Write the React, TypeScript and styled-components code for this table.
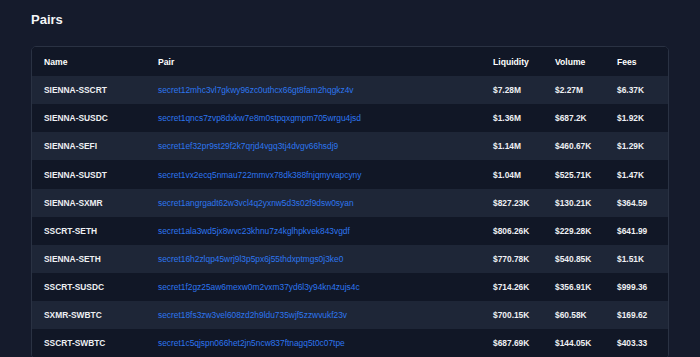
import React from "react";
import styled, { createGlobalStyle } from "styled-components";

type Pair = {
  name: string;
  address: string;
  liquidity: string;
  volume: string;
  fees: string;
};

const pairs: Pair[] = [
  { name: "SIENNA-SSCRT", address: "secret12mhc3vl7gkwy96zc0uthcx66gt8fam2hqgkz4v", liquidity: "$7.28M", volume: "$2.27M", fees: "$6.37K" },
  { name: "SIENNA-SUSDC", address: "secret1qncs7zvp8dxkw7e8m0stpqxgmpm705wrgu4jsd", liquidity: "$1.36M", volume: "$687.2K", fees: "$1.92K" },
  { name: "SIENNA-SEFI", address: "secret1ef32pr9st29f2k7qrjd4vgq3tj4dvgv66hsdj9", liquidity: "$1.14M", volume: "$460.67K", fees: "$1.29K" },
  { name: "SIENNA-SUSDT", address: "secret1vx2ecq5nmau722mmvx78dk388fnjqmyvapcyny", liquidity: "$1.04M", volume: "$525.71K", fees: "$1.47K" },
  { name: "SIENNA-SXMR", address: "secret1angrgadt62w3vcl4q2yxnw5d3s02f9dsw0syan", liquidity: "$827.23K", volume: "$130.21K", fees: "$364.59" },
  { name: "SSCRT-SETH", address: "secret1ala3wd5jx8wvc23khnu7z4kglhpkvek843vgdf", liquidity: "$806.26K", volume: "$229.28K", fees: "$641.99" },
  { name: "SIENNA-SETH", address: "secret16h2zlqp45wrj9l3p5px6j55thdxptmgs0j3ke0", liquidity: "$770.78K", volume: "$540.85K", fees: "$1.51K" },
  { name: "SSCRT-SUSDC", address: "secret1f2gz25aw6mexw0m2vxm37yd6l3y94kn4zujs4c", liquidity: "$714.26K", volume: "$356.91K", fees: "$999.36" },
  { name: "SXMR-SWBTC", address: "secret18fs3zw3vel608zd2h9ldu735wjf5zzwvukf23v", liquidity: "$700.15K", volume: "$60.58K", fees: "$169.62" },
  { name: "SSCRT-SWBTC", address: "secret1c5qjspn066het2jn5ncw837ftnagq5t0c07tpe", liquidity: "$687.69K", volume: "$144.05K", fees: "$403.33" },
];

const App = () => {
  return (
    <>
      <GlobalStyle />
      <Page>
        <Title>Pairs</Title>
        <Card>
          <HeaderRow>
            <Cell>Name</Cell>
            <Cell>Pair</Cell>
            <Cell>Liquidity</Cell>
            <Cell>Volume</Cell>
            <Cell>Fees</Cell>
          </HeaderRow>
          {pairs.map((p, i) => (
            <Row key={p.address} striped={i % 2 === 0}>
              <Cell>{p.name}</Cell>
              <AddressLink href="#">{p.address}</AddressLink>
              <Cell>{p.liquidity}</Cell>
              <Cell>{p.volume}</Cell>
              <Cell>{p.fees}</Cell>
            </Row>
          ))}
        </Card>
      </Page>
    </>
  );
};

export default App;

const GlobalStyle = createGlobalStyle`
  html, body {
    margin: 0;
    padding: 0;
    background: #151b2c;
    font-family: "Liberation Sans", Arial, sans-serif;
    overflow: hidden;
  }
`;

const Page = styled.div`
  padding: 12px 31px 0 31px;
  min-height: 357px;
  box-sizing: border-box;
`;

const Title = styled.h2`
  margin: 0 0 18px 0;
  font-size: 13px;
  line-height: 16px;
  font-weight: 700;
  color: #f4f5f7;
`;

const Card = styled.div`
  background: #111726;
  border: 1px solid #2a3243;
  border-radius: 5px;
  overflow: hidden;
`;

const Row = styled.div<{ striped?: boolean }>`
  display: grid;
  grid-template-columns: 114px 335px 62px 62px 1fr;
  align-items: center;
  height: 28.17px;
  padding-left: 12px;
  background: ${(p) => (p.striped ? "#1e2637" : "#111726")};
  font-size: 8.4px;
  font-weight: 700;
  color: #eef0f3;
`;

const HeaderRow = styled(Row)`
  height: 29px;
  font-size: 8.6px;
  color: #ffffff;
`;

const Cell = styled.div`
  white-space: nowrap;
`;

const AddressLink = styled.a`
  white-space: nowrap;
  font-weight: 400;
  color: #2d76f0;
  text-decoration: none;
`;
